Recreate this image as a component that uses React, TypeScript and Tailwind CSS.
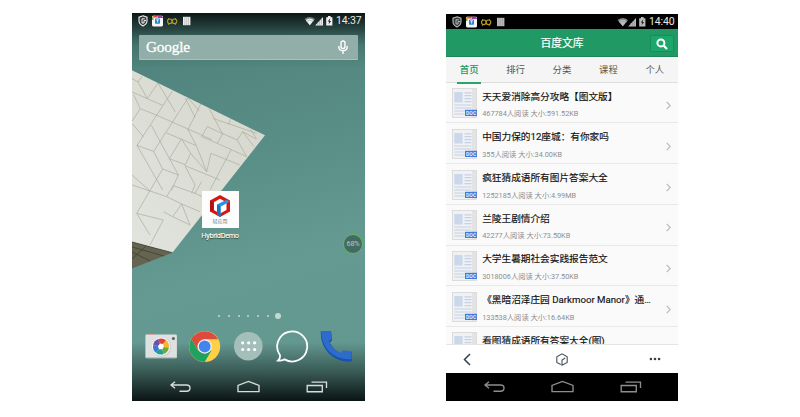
import type { ReactNode } from "react";

const documents = [
  { title: "天天爱消除高分攻略【图文版】", meta: "467784人阅读 大小:591.52KB" },
  { title: "中国力保的12座城：有你家吗", meta: "355人阅读 大小:34.00KB" },
  { title: "疯狂猜成语所有图片答案大全", meta: "1252185人阅读 大小:4.99MB" },
  { title: "兰陵王剧情介绍", meta: "42277人阅读 大小:73.50KB" },
  { title: "大学生暑期社会实践报告范文", meta: "3018006人阅读 大小:37.50KB" },
  { title: "《黑暗沼泽庄园 Darkmoor Manor》通…", meta: "133538人阅读 大小:16.64KB" },
  { title: "看图猜成语所有答案大全(图)", meta: "" },
];

const tabs = ["首页", "排行", "分类", "课程", "个人"];

function StatusBar({ time, dim }: { time: string; dim?: boolean }) {
  const grey = dim ? "#bcbcbc" : "#f0f0f0";
  return (
    <div className="relative flex h-[15px] shrink-0 items-center justify-between pl-[6px] pr-[3.5px]">
      <svg width="56" height="14" viewBox="0 0 56 14">
        <path d="M5 1.8 L9 3.2 V7 C9 9.4 7 11 5 12 C3 11 1 9.4 1 7 V3.2 Z" fill="#333b3a" stroke={grey} strokeWidth="1.1" />
        <path d="M6.8 4.8 H4 V9 H6 V6.6 H8" fill="none" stroke={grey} strokeWidth="1" />
        <rect x="14" y="1.8" width="11" height="10.6" rx="1.3" fill="#f7f7f7" />
        <path d="M14 5.5 V3 L15.4 1.8 H17 Z" fill="#f5a31c" />
        <path d="M16 1.8 H20 L19 3.6 H15 Z" fill="#e84a3b" />
        <path d="M20 1.8 H23.5 L25 3.2 V4 H19.5 Z" fill="#9b43ad" />
        <path d="M14 4 H15.5 V6 H14 Z" fill="#5bb748" />
        <rect x="17" y="4.4" width="5" height="5.4" rx="0.8" fill="#2e82cc" />
        <path d="M18.2 5.8 H21 M19.6 5.8 V8.5" stroke="white" strokeWidth="0.8" />
        <g fill="none" stroke="#b59a22" strokeWidth="1.1">
          <circle cx="31.8" cy="7.3" r="2.3" />
          <circle cx="36.5" cy="7.3" r="2.3" />
          <path d="M30 4 L31 5 M38 4 L37 5 M30 11 L31 10 M38 11 L37 10" strokeWidth="0.8" />
        </g>
        <rect x="45" y="2.8" width="7.4" height="8.4" fill={grey} />
        <path d="M46.9 3 V11 M48.8 3 V11 M50.6 3 V11" stroke="#898989" strokeWidth="0.45" />
      </svg>
      <div className="flex items-center gap-[2.5px]">
        <svg width="30" height="14" viewBox="0 0 30 14">
          <path d="M0.5 5 Q5.8 1 11 5 L5.8 11.3 Z" fill="#777f7d" />
          <path d="M1.8 6.2 Q5.8 3.4 9.8 6.2 L5.8 11.3 Z" fill={grey} />
          <path d="M2 7.4 Q5.8 5 9.6 7.4" fill="none" stroke="#808887" strokeWidth="0.5" />
          <path d="M11.2 11.5 L19 3 V11.5 Z" fill={grey} />
          <path d="M13.7 8 V11.3 M15.6 6 V11.3 M17.4 4 V11.3" stroke="#777" strokeWidth="0.45" />
          <path d="M22.2 3.2 H24 V2 H26.6 V3.2 H28.4 V11.5 H22.2 Z" fill={grey} />
          <path d="M26.3 4.3 L23.7 7.5 H25.2 L24.6 10.3 L27.2 7 H25.6 Z" fill="#222" />
        </svg>
        <span className="mt-[1px] text-[10.5px] leading-[14px] tracking-[-0.15px] text-[#e8e8e8]">{time}</span>
      </div>
    </div>
  );
}

function NavBar({ stroke, className }: { stroke: string; className: string }) {
  return (
    <div className={className}>
      <svg width="232" height="28" viewBox="0 0 232 28" fill="none" stroke={stroke} strokeWidth="1.35">
        <path d="M43 8.7 L39 12 L43 15.3 M39 12 H54.5 Q58 12 58 15 Q58 18.2 54.5 18.2 H47.5" />
        <path d="M106 18.6 V12.4 L116.5 8.4 L127 12.4 V18.6 Z" />
        <path d="M175.2 12.5 H190.3 V18.7 H175.2 Z M179.5 9.1 H194.5 V15" />
      </svg>
    </div>
  );
}

function Wallpaper() {
  return (
    <svg className="absolute inset-0" width="233" height="388" viewBox="132 13 233 388">
      <defs>
        <linearGradient id="sea" x1="0" y1="0" x2="0.15" y2="1">
          <stop offset="0" stopColor="#4d7f79" />
          <stop offset="0.4" stopColor="#588d86" />
          <stop offset="0.72" stopColor="#659a92" />
          <stop offset="1" stopColor="#639890" />
        </linearGradient>
        <linearGradient id="top" x1="0" y1="0" x2="0" y2="1">
          <stop offset="0" stopColor="#08100f" stopOpacity="0.95" />
          <stop offset="0.28" stopColor="#10201e" stopOpacity="0.65" />
          <stop offset="0.6" stopColor="#1d3c38" stopOpacity="0.2" />
          <stop offset="1" stopColor="#1d3c38" stopOpacity="0" />
        </linearGradient>
        <linearGradient id="bottom" x1="0" y1="0" x2="0" y2="1">
          <stop offset="0" stopColor="#07100f" stopOpacity="0" />
          <stop offset="0.5" stopColor="#07100f" stopOpacity="0.45" />
          <stop offset="1" stopColor="#07100f" stopOpacity="0.97" />
        </linearGradient>
        <linearGradient id="paper" x1="0" y1="1" x2="1" y2="0">
          <stop offset="0" stopColor="#e1e3de" />
          <stop offset="1" stopColor="#d5d7cc" />
        </linearGradient>
        <clipPath id="sheet"><path d="M132 70.3 L265 135.3 L172.3 252.7 L132 242 Z" /></clipPath>
      </defs>
      <rect x="132" y="13" width="233" height="388" fill="url(#sea)" />
      <path d="M132 70.3 L265 135.3 L172.3 252.7 L132 242 Z" fill="url(#paper)" />
      <g clipPath="url(#sheet)">
        <path
          transform="translate(130 65) scale(0.33333)"
          fill="none"
          stroke="#a9ab98"
          strokeWidth="2"
          d="M36 34 L24 51 L6 41 M24 51 L52 101 L84 54 L136 141 M6 81 L98 121 M128 77 L21 241 L71 259 M174 99 L71 259 M11 89 L31 131 L6 169 M31 131 L81 151 L246 224 M64 181 L145 330 M110 204 L199 242 L230 320 M174 194 L199 242 M216 109 L174 194 M166 99 L196 159 M174 99 L208 138 M6 175 L40 215 M21 241 L98 375 M154 222 L118 281 L166 299 L182 265 Z M235 125 L278 208 M248 160 L380 205 M303 160 L295 178 M215 215 L232 185 L278 206 L262 235 Z M182 265 L230 320 M262 235 L350 275 M278 206 L322 225 L338 200 L378 222 M322 225 L350 275 M230 320 L243 265 L330 300 M303 255 L240 375 M165 302 L270 345 M338 200 L372 245 M360 190 L380 222 M98 312 L20 445 L100 465 M71 259 L98 312 L145 330 L125 375 M6 330 L60 378 M165 302 L195 360 L185 385 M6 360 L60 378 L110 395 L130 362 L195 385 L215 350 M195 385 L250 410 M110 395 L155 417 L128 455 L100 440 M155 417 L210 440 M128 455 L180 480 M155 417 L180 480 M20 445 L60 510 M100 465 L60 540"
        />
      </g>
      <path d="M132 242 L172.3 252.7 L132 268.5 Z" fill="#656451" />
      <path d="M132 242 L172.3 252.7 M132 252 L150 261 M132 247 L164 256 M132 259 L146 246" stroke="#3f4033" strokeWidth="0.8" fill="none" />
      <rect x="132" y="13" width="233" height="55" fill="url(#top)" />
      <rect x="132" y="342" width="233" height="59" fill="url(#bottom)" />
    </svg>
  );
}

function AppIcon() {
  return (
    <div className="flex h-[37px] w-[37px] flex-col items-center bg-[#fdfdfd] pt-[3px]">
      <svg width="22" height="24" viewBox="0 0 22 24">
        <path d="M11 1 L21 6.5 V17.5 L11 23 L1 17.5 V6.5 Z" fill="#d91512" />
        <path d="M11 4.8 L17.5 8.2 V16 L11 19.5 L4.8 16 V8.2 Z" fill="white" />
        <path d="M1 6.5 L4.8 8.3 V16 L1 17.5 Z" fill="#b50f12" />
        <path d="M8 10.6 L17.5 5.8 L21 7.6 L11.5 12.8 V23 L8 21 Z" fill="#2794e3" />
        <path d="M8 10.6 L11.5 12.8 V23 L8 21 Z" fill="#1674c2" />
      </svg>
      <span className="-mt-[1px] text-[5px] leading-[9px] text-[#777]">轻应用</span>
    </div>
  );
}

function Dock() {
  const petals = ["#e14435", "#f5b52e", "#6cab3b", "#26a08e", "#3b78d6", "#7051a6"];
  return (
    <div className="flex h-[34px] items-center pl-[13px]">
      <svg width="208" height="34" viewBox="145 330 208 34">
        <rect x="148" y="333" width="6" height="2" fill="#d76b60" />
        <rect x="145.4" y="334.5" width="31.5" height="23.7" rx="1.3" fill="#dfe1e0" />
        <path d="M146 357.6 H176.4" stroke="#abb5b1" strokeWidth="0.8" />
        <circle cx="173.4" cy="338.4" r="1.5" fill="#53605c" />
        <circle cx="161.5" cy="347" r="9.8" fill="#c9cdcb" />
        <circle cx="161" cy="346.5" r="9.3" fill="#f4f4f4" />
        {petals.map((color, i) => (
          <path key={color} d="M161 346.5 L158.2 339 A8 8 0 0 1 166.1 340.3 Z" fill={color} transform={`rotate(${i * 60} 161 346.5)`} />
        ))}
        <path d="M160 343.5 L163 344 L164 346.6 L162.4 349.3 L159.2 349.2 L157.8 346.4 Z" fill="white" />

        <circle cx="204.7" cy="346.5" r="15.5" fill="#ffcf45" />
        <path d="M191.3 338.8 A15.5 15.5 0 0 1 218.1 339.3 H204.7 L198 350.4 Z" fill="#dd4b3e" />
        <path d="M191.3 338.8 A15.5 15.5 0 0 0 204.7 362 L211.4 350.4 L198 350.4 Z" fill="#20a15e" />
        <circle cx="204.7" cy="346.5" r="7.2" fill="#f3f5f6" />
        <circle cx="204.7" cy="346.5" r="5.9" fill="#4384ee" />

        <circle cx="248.3" cy="346.2" r="14.3" fill="#a4bfb9" />
        {[242.7, 248.6, 254.6].map((x) => (
          <g key={x} fill="white">
            <circle cx={x} cy="342.8" r="1.6" />
            <circle cx={x} cy="349.5" r="1.6" />
          </g>
        ))}
        <path d="M280 355.2 A15 15 0 1 1 284.6 359.4 Q281.5 361 278 360.6 Q280.5 358.5 280 355.2 Z" fill="none" stroke="white" strokeWidth="1.8" />
        <path d="M320.8 331.2 H331 L332.2 340 L329.8 342.8 C332 347 335.5 351 340.5 353.6 L343.2 351 L351.7 352 V361.4 C336 363 320 351 320.8 331.2 Z" fill="#1553ad" />
        <path d="M321.2 331.2 H330.8 L332 338.8 L328.8 341.4 C331 346.5 335 350.6 340.3 352.9 L343.4 350.2 L351.4 351.2 V359 C336 360.5 321.5 350 321.2 331.2 Z" fill="#2d6ccd" />
      </svg>
    </div>
  );
}

function HomePhone() {
  return (
    <div className="relative mt-[13px] h-[388px] w-[233px] overflow-hidden">
      <Wallpaper />
      <div className="relative flex h-full flex-col">
        <StatusBar time="14:37" />
        <div className="ml-[7px] mt-[7px] flex h-[25px] w-[219px] shrink-0 items-center justify-between rounded-[1px] border-b border-[#aabfba] bg-[#91aea9] pl-[7px] pr-[10px]">
          <span className="-mt-[1px] font-['Liberation_Serif',serif] text-[15.3px] leading-[20px] tracking-[-0.2px] text-white [-webkit-text-stroke:0.3px_white]">Google</span>
          <svg width="10" height="15" viewBox="0 0 10 15" fill="none" stroke="white" strokeWidth="1.4">
            <rect x="3" y="1" width="4" height="7.5" rx="2" />
            <path d="M0.8 6 V7 Q1 10.7 5 10.7 Q9 10.7 9.2 7 V6 M5 10.7 V14" />
          </svg>
        </div>
        <div className="ml-[69px] mt-[131px] flex w-[38px] shrink-0 flex-col items-center">
          <AppIcon />
          <span className="mt-[2px] whitespace-nowrap text-[7.3px] leading-[12px] tracking-[-0.3px] text-white [-webkit-text-stroke:0.1px_white] [text-shadow:0_1px_1px_#203c37]">HybridDemo</span>
        </div>
        <div className="-mt-[8px] ml-[211px] flex h-[20px] w-[20px] shrink-0 items-center justify-center rounded-full border border-[#66b957] bg-[#436b65] text-[7.3px] tracking-[-0.2px] text-[#b4c7c2]">68%</div>
        <div className="ml-[86px] mt-[58px] flex h-[7px] shrink-0 items-center gap-[7.8px]">
          {[0, 1, 2, 3, 4, 5].map((dot) => (
            <span key={dot} className="h-[2px] w-[2px] rounded-full bg-[#c5d8d3]" />
          ))}
          <span className="-ml-[1.8px] h-[6px] w-[6px] rounded-full bg-[#c4d8d3]" />
        </div>
        <div className="mt-[10.5px]"><Dock /></div>
        <NavBar stroke="#d8dddc" className="mt-auto h-[28px]" />
      </div>
    </div>
  );
}

function DocIcon() {
  return (
    <svg className="shrink-0" width="25" height="30" viewBox="0 0 25 30">
      <rect x="0.4" y="0.4" width="24" height="29" fill="#f1f1f1" stroke="#d6d6d6" strokeWidth="0.8" />
      <path d="M20 1 H24 V29 H20 Z" fill="#e3e3e3" />
      <rect x="2.3" y="4" width="8.3" height="10.5" fill="#cbd8ec" />
      <path d="M12.5 4.8 H19.5 M12.5 7.7 H19.5 M12.5 10.7 H19.5 M12.5 13.7 H19.5 M2.3 17 H19.5 M2.3 20 H19.5 M2.3 23 H13 M2.3 26 H13" stroke="#c3d2ec" strokeWidth="1.2" />
      <rect x="13" y="21.8" width="12" height="6.2" fill="#3f7bd8" />
      <text x="13.9" y="26.8" fontSize="5" fontWeight="700" textLength="10.3" fill="#e5eefb">DOC</text>
    </svg>
  );
}

function DocumentRow({ title, meta }: { title: string; meta: string }) {
  return (
    <div className="flex h-[40.7px] shrink-0 items-start border-b border-[#e9e9e9] pl-[6px] pr-[7px] pt-[5.5px]">
      <DocIcon />
      <div className="ml-[5.2px] mt-[0.4px] min-w-0 flex-1 whitespace-nowrap">
        <div className="text-[9.67px] leading-[15px] text-[#111] [-webkit-text-stroke:0.15px_#111]">{title}</div>
        <div className="mt-[4.6px] text-[7.3px] leading-[12px] text-[#8e8e8e]">{meta}</div>
      </div>
      <svg className="mt-[13px]" width="5" height="9" viewBox="0 0 5 9" fill="none" stroke="#b8b8b8" strokeWidth="1.1">
        <path d="M0.7 0.8 L4.2 4.5 L0.7 8.2" />
      </svg>
    </div>
  );
}

function Toolbar() {
  return (
    <div className="flex h-[28px] shrink-0 items-center justify-between bg-white pl-[17px] pr-[17px]">
      <svg width="8" height="13" viewBox="0 0 8 13" fill="none" stroke="#33414d" strokeWidth="1.5">
        <path d="M7 1 L1.5 6.5 L7 12" />
      </svg>
      <svg className="ml-[3px]" width="12" height="13" viewBox="0 0 12 13" fill="none" stroke="#43515c" strokeWidth="1.1">
        <path d="M4.8 11.6 L0.8 9.4 V3.7 L6 0.8 L11.2 3.7 V9.4 L6 12.2 V7 L9.2 5" />
      </svg>
      <svg width="12" height="4" viewBox="0 0 12 4" fill="#33414d">
        <circle cx="1.9" cy="2" r="1.3" /><circle cx="6" cy="2" r="1.3" /><circle cx="10.1" cy="2" r="1.3" />
      </svg>
    </div>
  );
}

function Tab({ active, children }: { active: boolean; children: ReactNode }) {
  return (
    <div className="flex justify-center">
      <span className={active ? "w-[24px] border-b-2 border-[#2ca36d] pt-[1px] text-center text-[9.4px] leading-[24px] text-[#219964] [-webkit-text-stroke:0.2px_#219964]" : "pt-[1px] text-[9.4px] leading-[24px] text-[#555]"}>
        {children}
      </span>
    </div>
  );
}

function LibraryPhone() {
  return (
    <div className="mt-[14px] flex h-[387px] w-[232px] flex-col overflow-hidden bg-[#fafafa]">
      <div className="bg-black"><StatusBar time="14:40" dim /></div>
      <div className="relative flex h-[27.5px] shrink-0 items-center justify-center border-b border-[#1b8757] bg-[#219964]">
        <span className="mt-[3px] text-[10.8px] leading-[16px] text-white [-webkit-text-stroke:0.2px_white]">百度文库</span>
        <div className="absolute right-[4px] top-[6px] flex h-[17px] w-[24px] items-center justify-center rounded-[1px] border border-[#1a8c5a] bg-[#1ca76d]">
          <svg width="12" height="12" viewBox="0 0 12 12" fill="none" stroke="white" strokeWidth="2">
            <circle cx="4.9" cy="4.9" r="3.5" /><path d="M7.5 7.5 L11 11" strokeWidth="2.3" />
          </svg>
        </div>
      </div>
      <div className="grid h-[26.3px] shrink-0 grid-cols-5 border-b border-[#dedede] bg-[#f5f5f5]">
        {tabs.map((tab, i) => (
          <Tab key={tab} active={i === 0}>{tab}</Tab>
        ))}
      </div>
      <div className="flex min-h-0 flex-1 flex-col overflow-hidden border-b border-[#e4e4e4]">
        {documents.map((doc) => <DocumentRow key={doc.title} {...doc} />)}
      </div>
      <Toolbar />
      <NavBar stroke="#8e8e8e" className="h-[28px] shrink-0 bg-black" />
    </div>
  );
}

export default function App() {
  return (
    <div className="flex h-[417px] w-[800px] items-start gap-[81px] overflow-hidden bg-white pl-[132px] font-[Roboto,'Noto_Sans_CJK_SC',sans-serif]">
      <HomePhone />
      <LibraryPhone />
    </div>
  );
}
